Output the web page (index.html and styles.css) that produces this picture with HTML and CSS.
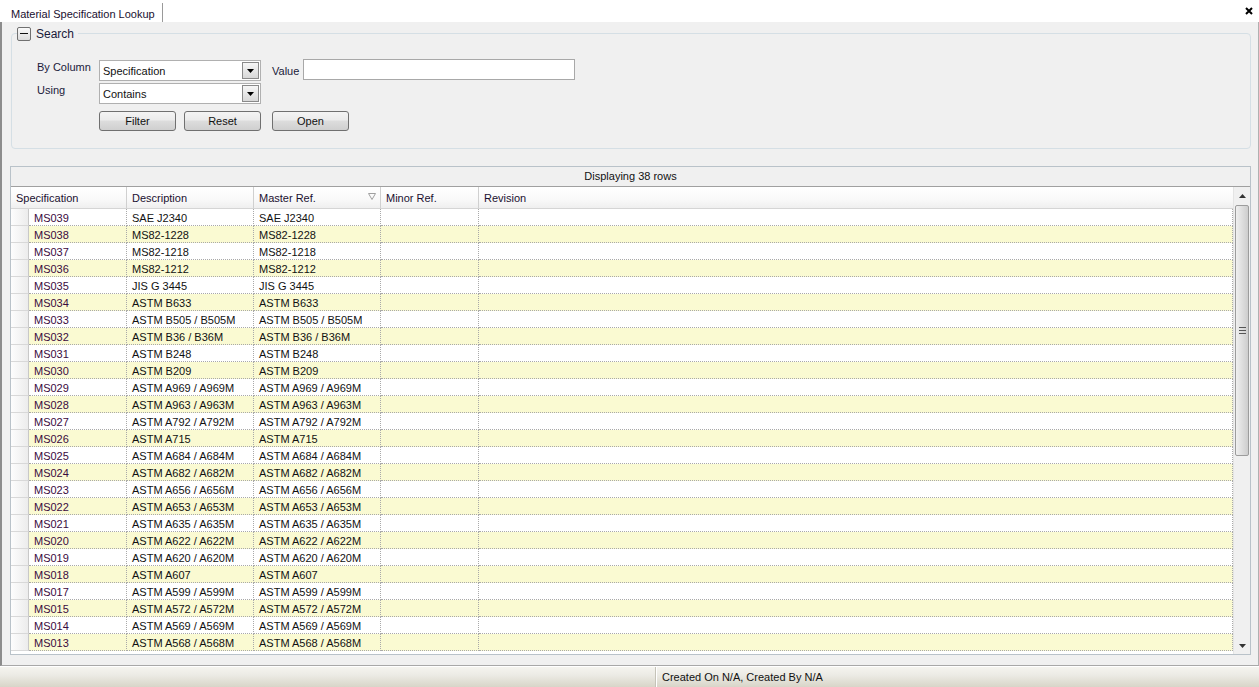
FILE: index.html
```html
<!DOCTYPE html>
<html>
<head>
<meta charset="utf-8">
<link rel="stylesheet" href="styles.css">
</head>
<body>
<div class="tabstrip">
  <div class="tab">Material Specification Lookup</div>
  <div class="close"><svg width="8" height="8" viewBox="0 0 8 8"><path d="M1 1L7 7M7 1L1 7" stroke="#000" stroke-width="2"/></svg></div>
</div>
<div class="main">
  <fieldset class="search">
    <legend><span class="collapse"><span class="minus"></span></span><span class="legend-text">Search</span></legend>
    <div class="form">
      <div class="label top">By Column</div>
      <div class="combo"><span class="combo-text">Specification</span><span class="drop"><svg width="7" height="4" viewBox="0 0 7 4"><path d="M0 0H7L3.5 4Z" fill="#000"/></svg></span></div>
      <div class="label mid">Value</div>
      <div class="textbox"></div>
      <div class="label top">Using</div>
      <div class="combo"><span class="combo-text">Contains</span><span class="drop"><svg width="7" height="4" viewBox="0 0 7 4"><path d="M0 0H7L3.5 4Z" fill="#000"/></svg></span></div>
      <div></div><div></div>
      <div></div>
      <div class="buttons"><button class="btn">Filter</button><button class="btn">Reset</button></div>
      <div class="open-cell"><button class="btn">Open</button></div>
    </div>
  </fieldset>

  <div class="grid">
    <div class="caption">Displaying 38 rows</div>
    <div class="grid-body">
      <div class="table">
        <div class="hdr">
          <div class="hc span2">Specification</div>
          <div class="hc">Description</div>
          <div class="hc">Master Ref.<svg class="filt" width="8" height="7" viewBox="0 0 8 7"><path d="M0.5 0.5H7.5L4 6.5Z" fill="none" stroke="#a0a0a0"/></svg></div>
          <div class="hc">Minor Ref.</div>
          <div class="hc last">Revision</div>
        </div>
        <div class="rows" id="rows"></div>
      </div>
      <div class="vscroll">
        <div class="arrow up"><svg width="7" height="4" viewBox="0 0 7 4"><path d="M0 4H7L3.5 0Z" fill="#333"/></svg></div>
        <div class="track">
          <div class="thumb"><span class="grip"></span></div>
        </div>
        <div class="arrow down"><svg width="7" height="4" viewBox="0 0 7 4"><path d="M0 0H7L3.5 4Z" fill="#333"/></svg></div>
      </div>
    </div>
  </div>
</div>
<div class="status">
  <div class="sp sp-left"></div>
  <div class="sp sp-right">Created On N/A, Created By N/A</div>
</div>
<script>
var data = [
["MS039","SAE J2340"],["MS038","MS82-1228"],["MS037","MS82-1218"],["MS036","MS82-1212"],
["MS035","JIS G 3445"],["MS034","ASTM B633"],["MS033","ASTM B505 / B505M"],["MS032","ASTM B36 / B36M"],
["MS031","ASTM B248"],["MS030","ASTM B209"],["MS029","ASTM A969 / A969M"],["MS028","ASTM A963 / A963M"],
["MS027","ASTM A792 / A792M"],["MS026","ASTM A715"],["MS025","ASTM A684 / A684M"],["MS024","ASTM A682 / A682M"],
["MS023","ASTM A656 / A656M"],["MS022","ASTM A653 / A653M"],["MS021","ASTM A635 / A635M"],["MS020","ASTM A622 / A622M"],
["MS019","ASTM A620 / A620M"],["MS018","ASTM A607"],["MS017","ASTM A599 / A599M"],["MS015","ASTM A572 / A572M"],
["MS014","ASTM A569 / A569M"],["MS013","ASTM A568 / A568M"]];
var html="";
data.forEach(function(d,i){
  html += '<div class="row'+(i%2?' alt':'')+'"><div class="sel"></div><div class="c spec">'+d[0]+'</div><div class="c">'+d[1]+'</div><div class="c">'+d[1]+'</div><div class="c"></div><div class="c last"></div></div>';
});
document.getElementById("rows").innerHTML=html;
</script>
</body>
</html>
```
FILE: styles.css
```css
* { box-sizing: border-box; }
html, body { margin: 0; padding: 0; }
body {
  width: 1259px;
  height: 687px;
  overflow: hidden;
  font-family: "Liberation Sans", Arial, sans-serif;
  font-size: 11px;
  color: #111;
  background: #fff;
}
.tabstrip {
  height: 22px;
  display: flex;
  align-items: stretch;
  background: #fff;
}
.tab {
  padding: 5px 5px 0 11px;
  border-right: 1px solid #9a9a9a;
  margin-top: 3px;
  line-height: 12px;
  color: #1a1030;
  width: 163px;
}
.close {
  margin-left: auto;
  width: 14px;
  padding-top: 5px;
}
.main {
  height: 644px;
  background: #f0f0f0;
  border-left: 2px solid #8c8c8c;
  border-right: 1px solid #b0b0b0;
  border-bottom: 1px solid #a8a8a8;
  padding: 4px 8px 0 8px;
}
.search {
  margin: 0 0 0 1px;
  width: 1240px;
  height: 123px;
  border: 1px solid #d5dfe5;
  border-radius: 4px;
  padding: 0;
}
.search legend {
  padding: 0;
  margin-left: 5px;
  display: flex;
  align-items: center;
  height: 15px;
}
.collapse {
  width: 14px;
  height: 14px;
  border: 1px solid #707070;
  border-radius: 2px;
  background: linear-gradient(#fafafa, #dcdcdc);
  display: flex;
  align-items: center;
  justify-content: center;
}
.minus {
  width: 8px;
  height: 1px;
  background: #111;
}
.legend-text {
  margin-left: 5px;
  margin-right: 4px;
  font-size: 12px;
  color: #1a1a3a;
}
.form {
  display: grid;
  grid-template-columns: 62px 162px 42px 272px;
  grid-template-rows: 20px 20px 20px;
  row-gap: 3px;
  margin: 19px 0 0 25px;
}
.label { color: #1a1a3a; white-space: nowrap; }
.label.top { padding-top: 1px; }
.label.mid { align-self: center; padding-left: 11px; margin-top: 1px; }
.combo {
  border: 1px solid #b0b0b0;
  background: #fff;
  display: flex;
  align-items: center;
  height: 21px;
}
.combo-text { padding-left: 3px; flex: 1; color: #111; }
.drop {
  width: 17px;
  height: 17px;
  margin-right: 1px;
  border: 1px solid #8a8a8a;
  background: linear-gradient(#f6f6f6, #d8d8d8);
  display: flex;
  align-items: center;
  justify-content: center;
}
.textbox {
  border: 1px solid #a8a8a8;
  background: #fff;
  height: 21px;
  margin-top: -1px;
}
.buttons {
  display: flex;
  gap: 8px;
  margin-top: 5px;
}
.open-cell {
  grid-column: 3 / span 2;
  margin-top: 5px;
  padding-left: 11px;
}
.btn {
  font-family: "Liberation Sans", Arial, sans-serif;
  font-size: 11px;
  color: #111;
  width: 77px;
  height: 20px;
  padding: 0;
  border: 1px solid #707070;
  border-radius: 3px;
  background: linear-gradient(#f4f4f4 0%, #ebebeb 45%, #dddddd 50%, #cfcfcf 100%);
}
.grid {
  margin-top: 17px;
  width: 1241px;
  height: 489px;
  border: 1px solid #b9c2c9;
  display: flex;
  flex-direction: column;
  background: #fff;
}
.caption {
  height: 20px;
  line-height: 19px;
  text-align: center;
  background: #f0f0f0;
  border-bottom: 1px solid #a0a0a0;
  color: #111;
}
.grid-body {
  flex: 1;
  display: flex;
  min-height: 0;
}
.table {
  flex: 1;
  display: flex;
  flex-direction: column;
  overflow: hidden;
}
.hdr, .row {
  display: grid;
  grid-template-columns: 18px 98px 127px 127px 98px 1fr;
}
.hdr {
  height: 22px;
  flex: none;
  background: linear-gradient(#ffffff 0%, #f9f9f9 60%, #efefef 100%);
  border-bottom: 1px solid #d5d5d5;
}
.hc {
  position: relative;
  padding: 5px 0 0 5px;
  border-right: 1px solid #d0d0d0;
  color: #1a1030;
  white-space: nowrap;
}
.hc.span2 { grid-column: span 2; }
.hc.last { border-right: none; }
.filt { position: absolute; right: 4px; top: 6px; }
.rows { flex: 1; }
.row {
  height: 17px;
  background: #fff;
}
.row.alt { background: #fafad2; }
.sel {
  background: linear-gradient(90deg, #fdfdfd, #ececec);
  border-right: 1px solid #c8c8c8;
  border-bottom: 1px solid #d8d8d8;
}
.c {
  padding: 3px 0 0 5px;
  line-height: 12px;
  border-right: 1px dotted #a9a9a9;
  border-bottom: 1px dotted #a9a9a9;
  white-space: nowrap;
  overflow: hidden;
  color: #111;
}
.c.spec { color: #3a0a3e; }
.vscroll {
  width: 17px;
  display: flex;
  flex-direction: column;
  background: #f0f0f0;
  border-left: 1px solid #e4e4e4;
}
.arrow {
  height: 17px;
  display: flex;
  align-items: center;
  justify-content: center;
}
.track {
  flex: 1;
  padding: 1px 1px;
}
.thumb {
  height: 251px;
  border: 1px solid #9c9c9c;
  border-radius: 2px;
  background: linear-gradient(90deg, #f0f0f0, #e0e0e0 45%, #cdcdcd 100%);
  display: flex;
  align-items: center;
  justify-content: center;
}
.grip {
  width: 7px;
  height: 7px;
  background: repeating-linear-gradient(#555 0, #555 1px, transparent 1px, transparent 3px);
}
.status {
  height: 21px;
  display: flex;
  background: linear-gradient(#f5f4ef 0%, #ecebe5 40%, #d8d5c8 100%);
  border-top: 1px solid #fff;
}
.sp {
  height: 100%;
}
.sp-left {
  width: 656px;
  border-right: 1px solid #c5c3b8;
}
.sp-right {
  flex: 1;
  border-left: 1px solid #fff;
  padding: 4px 0 0 5px;
  color: #111;
}
```
